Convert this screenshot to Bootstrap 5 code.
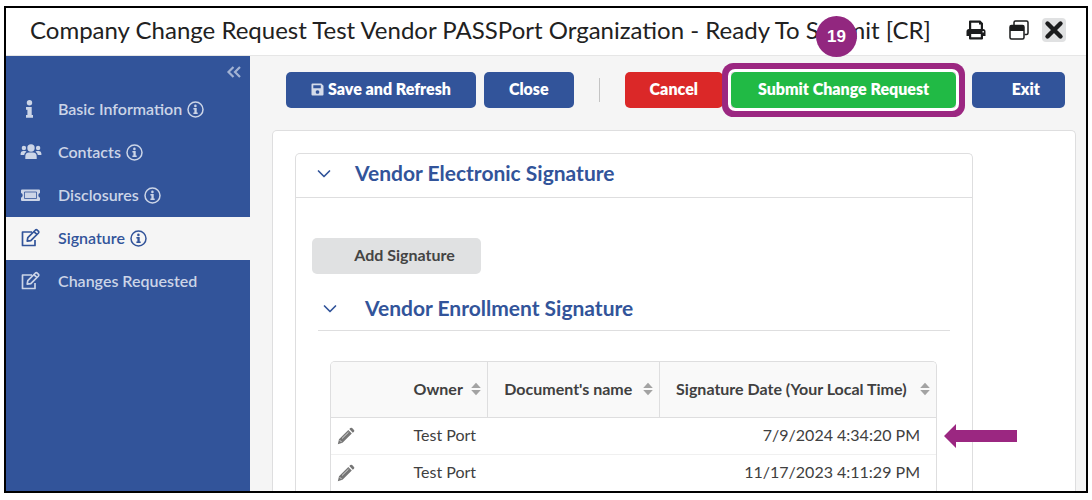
<!DOCTYPE html>
<html lang="en">
<head>
<meta charset="utf-8">
<meta name="viewport" content="width=device-width, initial-scale=1">
<title>Company Change Request</title>
<link href="https://cdn.jsdelivr.net/npm/bootstrap@5.3.0/dist/css/bootstrap.min.css" rel="stylesheet">
<style>
  :root { --brand: #32549a; --callout: #9b2781; --line: #dededf; --soft: #f5f5f5; }
  body { font-family: Lato, "Liberation Sans", sans-serif; font-size: 16px; line-height: 24px; color: #404040; background: #fff; padding: 6px 4px 7px; }
  .window { min-height: calc(100vh - 13px); border: 2px solid #000; }
  .titlebar { min-height: 48px; padding: 0 20px 3px 24px; border-bottom: 1px solid #e6e6e6; }
  .titlebar h1 { font-size: 24px; line-height: 28px; font-weight: 400; color: #212121; }
  .tools { gap: 11px; }
  .tool { width: 24px; height: 24px; padding: 2px; border: 0; border-radius: 4px; background: none; color: #1b1c1d; display: block; }
  .tool svg { display: block; width: 20px; height: 20px; }
  .tool-close { background: #e0e1e2; }
  .sidebar { width: 244px; background: var(--brand); }
  .collapse-row { height: 32px; padding: 8px 8px 0 0; }
  .collapse-row button { border: 0; padding: 0; background: none; color: #a3b3d3; }
  .side-link { height: 43px; padding: 0 14px 1px; gap: 16px; color: #ccd5e7; text-decoration: none; font-weight: 600; border-radius: 0; }
  .side-link:hover { color: #fff; }
  .side-link.active { background: var(--soft); color: var(--brand); }
  .side-link .lead-icon { width: 22px; height: 20px; }
  .side-link .info-icon { width: 17px; height: 17px; margin-left: 5px; }
  .workspace { background: var(--soft); padding: 16px 10px 0 22px; min-width: 0; }
  .actions { padding: 0 11px 22px 14px; }
  .app-btn { height: 36px; padding: 0 25px 2px; border: 0; border-radius: 5px; font-size: 16px; line-height: 24px; font-weight: 800; color: #fff; white-space: nowrap; }
  .app-btn:hover { color: #fff; filter: brightness(.95); }
  .btn-brand, .btn-brand:hover { background: var(--brand); }
  .btn-stop, .btn-stop:hover { background: #db2828; }
  .btn-go, .btn-go:hover { background: #21ba45; }
  .btn-go { padding-left: 27px; padding-right: 27px; }
  .btn-exit { padding-left: 40px; }
  .btn-plain, .btn-plain:hover { background: #e0e1e2; color: #444; font-weight: 700; }
  .divider { width: 1px; height: 24px; margin: 0 25px; background: #c4c4c4; }
  .highlight { border-radius: 4px; box-shadow: 0 0 0 3px #fff, 0 0 0 9px var(--callout); }
  .step { left: 85px; top: -56px; width: 41px; height: 41px; border-radius: 50%; background: #92277f; color: #fff; font: bold 17px/41px "Liberation Sans", sans-serif; }
  .sheet { background: #fff; border: 1px solid var(--line); border-bottom: 0; border-radius: 5px 5px 0 0; padding: 22px 102px 0 22px; }
  .panel { border: 1px solid var(--line); border-bottom: 0; border-radius: 5px 5px 0 0; }
  .panel h2, .panel h3 { font-size: 21px; line-height: 28px; font-weight: 700; color: var(--brand); margin: 0; }
  .panel-head { height: 44px; padding: 0 21px 5px; gap: 24px; border-bottom: 1px solid var(--line); }
  .panel-body { padding: 40px 22px 0; }
  .panel-body > .btn-plain { width: 169px; margin-left: -6px; padding: 0 0 2px 16px; }
  .sub-head { height: 46px; margin-top: 11px; padding: 0 5px; gap: 28px; border-bottom: 1px solid var(--line); }
  .chev { width: 14px; height: 10px; margin-top: 2px; color: var(--brand); }
  .grid-wrap { margin: 30px 13px 0 12px; border: 1px solid var(--line); border-bottom: 0; border-radius: 5px 5px 0 0; }
  .grid-wrap table { width: 100%; table-layout: fixed; border-collapse: separate; border-spacing: 0; }
  .grid-wrap th { height: 56px; padding: 0 6px 2px 16px; background: #f9f9f9; border-right: 1px solid var(--line); border-bottom: 1px solid var(--line); font-weight: 700; white-space: nowrap; }
  .grid-wrap th:first-child { border-right: 0; border-top-left-radius: 4px; }
  .grid-wrap th:last-child { border-right: 0; border-top-right-radius: 4px; }
  .grid-wrap td { height: 37px; padding: 0 16px 2px; border-bottom: 1px solid #f0f0f0; white-space: nowrap; }
  .grid-wrap tr:last-child td { height: 36px; border-bottom: 0; }
  .grid-wrap td:first-child { padding: 0 6px; }
  .edit { border: 0; padding: 0; background: none; color: #767676; display: block; }
  .edit svg, .sort svg { display: block; }
  .sort { border: 0; padding: 0; background: none; color: #a3a3a3; }
  .pointer { left: 100%; top: 6px; margin-left: 8px; }
</style>
</head>
<body>
<svg class="d-none" aria-hidden="true">
  <symbol id="info" viewBox="0 0 17 17"><circle cx="8.5" cy="8.5" r="7.5" fill="none" stroke="currentColor" stroke-width="1.5"/><circle cx="8.4" cy="4.9" r="1.3" fill="currentColor"/><path fill="currentColor" d="M6.4 7h3.3v4.4h1V13H6.4v-1.6h1V8.5h-1z"/></symbol>
  <symbol id="edit" viewBox="0 0 22 20"><path fill="none" stroke="currentColor" stroke-width="1.7" stroke-linejoin="round" d="M12 4H2.5v13.5H15V12M7.2 13.2l.6-3.5 7.700-7.700q.8-.7 1.600 0l1.400 1.400q.7.8 0 1.600l-7.700 7.700zM14 3.600l3 3"/></symbol>
  <symbol id="chev" viewBox="0 0 14 10"><path fill="none" stroke="currentColor" stroke-width="1.700" stroke-linecap="round" stroke-linejoin="round" d="M1.500 2 7 7.500 12.500 2"/></symbol>
  <symbol id="pencil" viewBox="0 0 18 18"><path fill="currentColor" d="m11.300 3 3.500 3.500-9.300 9.200-4.700 1.500L2 12.300zM12.300 2.100l1-1q.9-.7 1.800 0L17 3q.7.9 0 1.700l-1.200 1z"/><path stroke="#fff" stroke-width=".7" fill="none" d="m5 11.500 6.500-6.300M2.700 13.200l2 2"/></symbol>
  <symbol id="sort" viewBox="0 0 10 14"><path fill="currentColor" d="M.2 6 5 .7 9.800 6zM.2 8h9.600L5 13.300z"/></symbol>
</svg>

<div class="window d-flex flex-column">
  <header class="titlebar d-flex align-items-center justify-content-between gap-3">
    <h1 class="m-0">Company Change Request Test Vendor PASSPort Organization - Ready To Submit [CR]</h1>
    <div class="tools d-flex align-items-center">
      <button type="button" class="tool me-2" aria-label="Print"><svg viewBox="0 0 20 20"><path fill="currentColor" fill-rule="evenodd" d="M3 1.500Q3 .5 4 .5h10.300L17 3.200V9q2.500 0 2.500 2.500V16H17v2.500q0 1-1 1H4q-1 0-1-1V16H.5v-4.500Q.5 9 3 9zM5.200 2.700V9h9.600V4.500H13V2.700zM5.200 14v3.300h9.600V14zM16.500 11v1.500h1.400V11z"/></svg></button>
      <button type="button" class="tool" aria-label="Restore window"><svg viewBox="0 0 20 20"><path fill="none" stroke="currentColor" stroke-width="1.500" d="M5 5V2.500Q5 1 6.500 1H17.500Q19 1 19 2.500v10.500q0 1.500-1.500 1.500h-2"/><rect x="1" y="5.500" width="14" height="13.500" rx="1.500" fill="#fff" stroke="currentColor" stroke-width="1.500"/><path fill="currentColor" d="M1 6h14v5H1z"/></svg></button>
      <button type="button" class="tool tool-close" aria-label="Close window"><svg viewBox="0 0 20 20"><path stroke="currentColor" stroke-width="4.400" stroke-linecap="round" d="m3.500 3.500 13 13m0-13-13 13"/></svg></button>
    </div>
  </header>

  <div class="d-flex flex-grow-1">
    <nav class="sidebar flex-shrink-0" aria-label="Sections">
      <div class="collapse-row d-flex justify-content-end align-items-start">
        <button type="button" aria-label="Collapse menu"><svg class="d-block" width="16" height="16" viewBox="0 0 16 16"><path fill="none" stroke="currentColor" stroke-width="2.200" d="M7.500 3 2.500 8l5 5M14 3 9 8l5 5"/></svg></button>
      </div>
      <a href="#" class="side-link d-flex align-items-center"><svg class="lead-icon" viewBox="0 0 22 20"><circle cx="9.500" cy="3.700" r="2.700" fill="currentColor"/><path fill="currentColor" d="M6 8h5.700v8H13v2.700H6V16h1.400v-5.200H6z"/></svg><span class="d-flex align-items-center">Basic Information<svg class="info-icon"><use href="#info"/></svg></span></a>
      <a href="#" class="side-link d-flex align-items-center"><svg class="lead-icon" viewBox="0 0 22 20"><g fill="currentColor"><circle cx="11" cy="6" r="3.700"/><circle cx="3.900" cy="6" r="2.200"/><circle cx="18.100" cy="6" r="2.200"/><path d="M5.300 17v-2.500q0-4 3.700-4h4q3.700 0 3.700 4V17zM.6 13v-1.500Q.6 9 3 9h2.500l1 .8q-2 1-2.300 3.200zM21.400 13v-1.500Q21.400 9 19 9h-2.500l-1 .8q2 1 2.300 3.200z"/></g></svg><span class="d-flex align-items-center">Contacts<svg class="info-icon"><use href="#info"/></svg></span></a>
      <a href="#" class="side-link d-flex align-items-center"><svg class="lead-icon" viewBox="0 0 22 20"><path fill="currentColor" d="M2 4.500h17q1 0 1 1V8q-1.700.4-1.700 2.300T20 12.700v2.300q0 1-1 1H2q-1 0-1-1v-2.300q1.700-.4 1.700-2.400T1 8V5.500q0-1 1-1z"/><path fill="none" stroke="var(--brand)" stroke-width=".8" d="M4.500 7h12v6.500h-12z"/></svg><span class="d-flex align-items-center">Disclosures<svg class="info-icon"><use href="#info"/></svg></span></a>
      <a href="#" class="side-link active d-flex align-items-center" aria-current="page"><svg class="lead-icon"><use href="#edit"/></svg><span class="d-flex align-items-center">Signature<svg class="info-icon"><use href="#info"/></svg></span></a>
      <a href="#" class="side-link d-flex align-items-center"><svg class="lead-icon"><use href="#edit"/></svg><span>Changes Requested</span></a>
    </nav>

    <main class="workspace flex-grow-1">
      <div class="actions d-flex align-items-center">
        <button type="button" class="btn app-btn btn-brand d-flex align-items-center gap-1"><svg width="13" height="13" viewBox="0 0 13 13"><path fill="#d5dcea" fill-rule="evenodd" d="M1.500.5h8.800l2.200 2.200v8.800q0 1-1 1h-10q-1 0-1-1v-10q0-1 1-1zM2.300 2.200v3h7.500v-3zM6.500 7.200a1.800 1.800 0 1 0 .01 0z"/></svg>Save and Refresh</button>
        <button type="button" class="btn app-btn btn-brand ms-2">Close</button>
        <span class="divider"></span>
        <button type="button" class="btn app-btn btn-stop">Cancel</button>
        <div class="highlight position-relative ms-2">
          <button type="button" class="btn app-btn btn-go">Submit Change Request</button>
          <span class="step position-absolute text-center">19</span>
        </div>
        <button type="button" class="btn app-btn btn-brand btn-exit ms-auto">Exit</button>
      </div>

      <div class="sheet">
        <section class="panel">
          <div class="panel-head d-flex align-items-center"><svg class="chev"><use href="#chev"/></svg><h2>Vendor Electronic Signature</h2></div>
          <div class="panel-body">
            <button type="button" class="btn app-btn btn-plain">Add Signature</button>
            <div class="sub-head d-flex align-items-center"><svg class="chev"><use href="#chev"/></svg><h3>Vendor Enrollment Signature</h3></div>
            <div class="grid-wrap">
              <table>
                <colgroup><col style="width:11%"><col style="width:15%"><col style="width:28.4%"><col style="width:45.6%"></colgroup>
                <thead><tr>
                  <th aria-label="Edit"></th>
                  <th scope="col"><div class="d-flex align-items-center justify-content-between">Owner<button type="button" class="sort" aria-label="Sort by owner"><svg width="10" height="14"><use href="#sort"/></svg></button></div></th>
                  <th scope="col"><div class="d-flex align-items-center justify-content-between">Document's name<button type="button" class="sort" aria-label="Sort by document's name"><svg width="10" height="14"><use href="#sort"/></svg></button></div></th>
                  <th scope="col"><div class="d-flex align-items-center justify-content-between">Signature Date (Your Local Time)<button type="button" class="sort" aria-label="Sort by signature date"><svg width="10" height="14"><use href="#sort"/></svg></button></div></th>
                </tr></thead>
                <tbody>
                  <tr><td><button type="button" class="edit" aria-label="Edit"><svg width="18" height="18"><use href="#pencil"/></svg></button></td><td>Test Port</td><td></td><td class="text-end position-relative">7/9/2024 4:34:20 PM<svg class="pointer position-absolute" width="73" height="24" viewBox="0 0 73 24"><path fill="#9b2781" d="M0 12 12 0v6h61v12H12v6z"/></svg></td></tr>
                  <tr><td><button type="button" class="edit" aria-label="Edit"><svg width="18" height="18"><use href="#pencil"/></svg></button></td><td>Test Port</td><td></td><td class="text-end">11/17/2023 4:11:29 PM</td></tr>
                </tbody>
              </table>
            </div>
          </div>
        </section>
      </div>
    </main>
  </div>
</div>
<script src="https://cdn.jsdelivr.net/npm/bootstrap@5.3.0/dist/js/bootstrap.bundle.min.js"></script>
</body>
</html>
